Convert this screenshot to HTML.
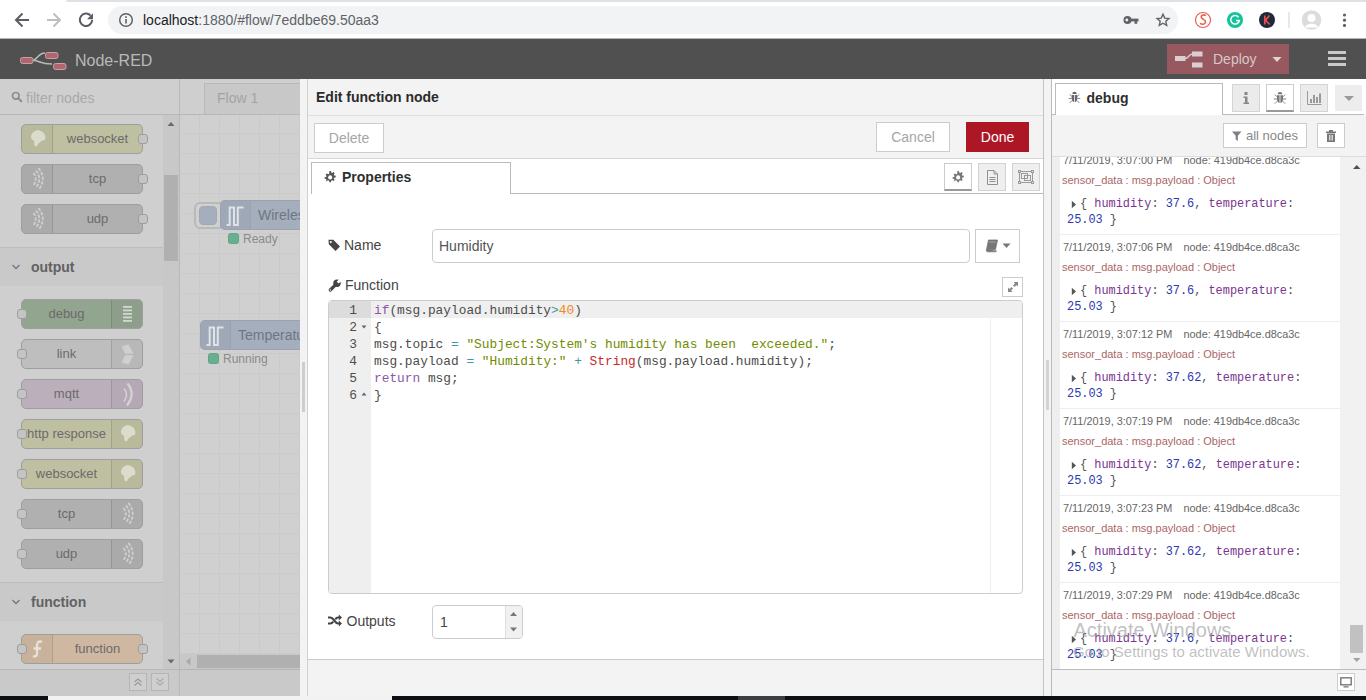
<!DOCTYPE html>
<html><head><meta charset="utf-8"><title>Node-RED</title>
<style>
*{box-sizing:border-box;margin:0;padding:0}
html,body{width:1366px;height:700px;overflow:hidden;background:#fff;font-family:"Liberation Sans",Arial,sans-serif;}
#root{position:absolute;left:0;top:0;width:1366px;height:700px;overflow:hidden;background:#fff}
.abs{position:absolute}
.t{position:absolute;white-space:nowrap;line-height:1}
/* chrome */
#tabstrip{left:66px;top:0;width:1300px;height:2px;background:#dee1e6;border-radius:0 0 0 3px}
#toolbar{left:0;top:0;width:1366px;height:39px;background:#fff}
#omni{left:108px;top:6px;width:1070px;height:28px;border-radius:14px;background:#f1f3f4}
/* header */
#hdr{left:0;top:39px;width:1366px;height:40px;background:#505050}
/* palette */
#pal{left:0;top:79px;width:179px;height:617px;background:#cfcfcf;overflow:hidden}
#ws{left:179px;top:79px;width:121px;height:617px;background:#cfcfcf;overflow:hidden}
#tray{left:300px;top:79px;width:745px;height:617px;background:#fff}
#sep{left:1044px;top:79px;width:7px;height:617px;background:#f3f3f3}
#side{left:1051px;top:79px;width:315px;height:617px;background:#fff}
#taskbar{left:0;top:696px;width:1366px;height:4px;background:#0c0e14}

/* chrome icons */
.ic{position:absolute}
#url{left:143px;top:13px;font-size:14px;color:#5f6368}
#url b{font-weight:normal;color:#202124}
#logo-t{left:75px;top:53px;font-size:16px;color:#b9b9b9}
#deploy{left:1167px;top:44px;width:122px;height:30px;background:#a05c64}
#deploy-t{left:1213px;top:52px;font-size:14px;color:#d4c8ca}

/* palette */
#pal-search{left:0;top:0;width:180px;height:36px;border-bottom:1px solid #b8b8b8;background:#cfcfcf}
#pal-search .t{left:26px;top:12px;font-size:14px;color:#a9a9a9}
#pal-scroll{left:0;top:36px;width:163px;height:554px;background:#cfcfcf}
#pal-sb{left:163px;top:36px;width:16px;height:554px;background:#c8c8c8}
#pal-foot{left:0;top:590px;width:180px;height:27px;background:#c9c9c9;border-top:1px solid #b8b8b8}
.pcat{position:absolute;left:0;width:163px;height:39px;background:#c9c9c9;border-top:1px solid #bcbcbc}
.pcat .t{left:31px;top:12px;font-size:14px;font-weight:bold;color:#626262}
.pn{position:absolute;left:21px;width:122px;height:30px;border:1px solid #9e9e9e;border-radius:5px}
.pn .lb{position:absolute;top:0;height:28px;line-height:28px;font-size:13px;color:#6b6b6b;text-align:center;white-space:nowrap}
.pn.in .lb{left:31px;right:0}
.pn.out .lb{left:0;right:31px}
.pn .icn{position:absolute;top:0;width:31px;height:28px;background:rgba(0,0,0,0.03)}
.pn.in .icn{left:0;border-right:1px solid rgba(0,0,0,0.12);border-radius:4px 0 0 4px}
.pn.out .icn{right:0;border-left:1px solid rgba(0,0,0,0.12);border-radius:0 4px 4px 0}
.pn .icn svg{position:absolute;left:0;top:0}
.port{position:absolute;width:10px;height:10px;top:9px;background:#c4c4c4;border:1px solid #9e9e9e;border-radius:3px}
.port.l{left:-5px}.port.r{right:-6px}
.pbtn{position:absolute;top:3px;width:18px;height:18px;border:1px solid #b5b5b5;background:#cfcfcf}

/* workspace */
#ws{border-left:1px solid #b8b8b8}
#ws-tabs{left:0;top:0;width:121px;height:36px;background:#cfcfcf;border-bottom:1px solid #b8b8b8}
#ws-tab{left:24px;top:4px;width:120px;height:31px;background:#c8c8c8;border:1px solid #b8b8b8;border-bottom:none}
#ws-tab .t{left:12px;top:7px;font-size:14px;color:#a3a3a3}
#ws-grid{left:1px;top:36px;width:119px;height:540px;background-color:#d0d0d0;
 background-image:linear-gradient(to right,#cacaca 1px,transparent 1px),linear-gradient(to bottom,#cacaca 1px,transparent 1px);background-size:20px 20px;background-position:18px 18px}
#ws-hsb{left:0;top:575px;width:121px;height:15px;background:#c8c8c8}
#ws-foot{left:0;top:590px;width:121px;height:27px;background:#c9c9c9;border-top:1px solid #b5b5b5}
.fn{position:absolute;height:30px;background:#a5aebc;border:1px solid #9ba3b0;border-radius:5px 0 0 5px;border-right:none}
.fn .icn{position:absolute;left:0;top:0;width:30px;height:28px;background:rgba(0,0,0,0.03);border-right:1px solid rgba(0,0,0,0.04);border-radius:4px 0 0 4px}
.fn .t{top:7px;font-size:14px;color:#6d7683}
.st{position:absolute;width:11px;height:11px;background:#6aae90;border-radius:2.5px;border:1px solid #62a487}
.stt{font-size:12px;color:#8b8b8b}

/* tray */
#tray{background:#f3f3f3}
#tray-main{left:7px;top:0;width:737px;height:617px;background:#fff;border-left:1px solid #d0d0d0;border-right:1px solid #c4c4c4}
#tray-hdr{left:0;top:0;width:735px;height:37px;background:#f3f3f3;border-bottom:1px solid #ddd}
#tray-hdr .t{left:8px;top:11px;font-size:14px;font-weight:bold;color:#2b2b2b}
#tray-tb{left:0;top:37px;width:735px;height:43px;background:#f3f3f3;border-bottom:1px solid #d6d6d6}
.btn{position:absolute;top:7px;height:30px;border:1px solid #ccc;background:#fff;font-size:14px;line-height:28px;text-align:center;color:#a6a6a6}
#tray-foot{left:0;top:580px;width:735px;height:37px;background:#f3f3f3;border-top:1px solid #c9c9c9}
#ptab{left:3px;top:83px;width:200px;height:32px;background:#fff;border:1px solid #bbb;border-bottom:none}
#ptab .t{left:30px;top:7px;font-size:14px;font-weight:bold;color:#2f2f2f}
#ptabline{left:203px;top:114px;width:532px;height:1px;background:#bbb}
.ibtn{position:absolute;top:84px;width:28px;height:28px;border:1px solid #d2d2d2;background:#efefef}
.lbl{font-size:14px;color:#444}
#name-in{left:124px;top:150px;width:538px;height:34px;border:1px solid #ccc;border-radius:4px;background:#fff}
#name-in .t{left:6px;top:9px;font-size:14px;color:#555}
#book{left:667px;top:150px;width:45px;height:34px;border:1px solid #ccc;background:#fff}
#expand{left:694px;top:198px;width:21px;height:20px;border:1px solid #ccc;background:#fff}
#ace{left:20px;top:221px;width:695px;height:294px;border:1px solid #ccc;border-radius:4px;background:#fff;overflow:hidden}
#ace .gut{position:absolute;left:0;top:0;width:42px;height:292px;background:#efefef}
#ace .al{position:absolute;left:0;top:0;width:693px;height:17px;background:#efefef}
#ace .gal{position:absolute;left:0;top:0;width:42px;height:17px;background:#dcdcdc}
#ace .pm{position:absolute;left:661px;top:0;width:1px;height:292px;background:#f0f0f0}
.ln,.cl{position:absolute;font-family:"Liberation Mono","DejaVu Sans Mono",monospace;font-size:12.83px;line-height:17px;height:17px;white-space:pre;color:#4d4d4c}
.ln{left:0;width:28px;text-align:right}
.cl{left:45px}
.k{color:#8959a8}.o{color:#3e999f}.n{color:#f5871f}.s{color:#718c00}.v{color:#c82829}
#outs-in{left:124px;top:526px;width:91px;height:34px;border:1px solid #ccc;border-radius:4px;background:#fff}

/* sidebar */
#side{border-left:1px solid #bbb;background:#fff}
#sd-tabs{left:0;top:0;width:313px;height:36px;background:#fff}
#sd-tabline{left:169px;top:35px;width:142px;height:1px;background:#bbb}
#sd-tab{left:2px;top:4px;width:168px;height:32px;background:#fff;border:1px solid #bbb;border-bottom:none}
#sd-tab .t{left:30.500px;top:6.500px;font-size:14px;font-weight:bold;color:#2f2f2f}
.sbtn{position:absolute;top:5px;width:28px;height:28px;border:1px solid #d4d4d4;background:#ebebeb}
#sd-tb{left:-1px;top:36px;width:315px;height:42px;background:#f3f3f3;border-bottom:1px solid #ddd}
.sb2{position:absolute;top:8px;height:25px;border:1px solid #ccc;background:#fff}
#sd-list{left:-1px;top:78px;width:288px;height:512px;background:#fff;overflow:hidden}
#sd-sb{left:287px;top:78px;width:26px;height:512px;background:#f1f1f1}
#sd-foot{left:-1px;top:590px;width:315px;height:27px;background:#f3f3f3;border-top:1px solid #bbb}
.msg{position:absolute;left:0;width:288px;height:87px;border-left:8px solid #eee;border-top:1px solid #eee}
.msg .t{font-size:10.9px;color:#666}
.msg .tp{font-size:11px;color:#a66}
.msg .pl{position:absolute;font-family:"Liberation Mono","DejaVu Sans Mono",monospace;font-size:11.9px;white-space:pre;line-height:1;color:#555}
.ky{color:#7a3590}.nm{color:#2a38b0}
.wm{position:absolute;white-space:nowrap;color:rgba(150,150,150,0.6);line-height:1}
</style></head><body><div id="root">
<div id="toolbar" class="abs"></div>
<div id="tabstrip" class="abs"></div><div class="abs" style="left:0;top:38px;width:1366px;height:1px;background:#b4b4b4"></div>
<div id="omni" class="abs"></div>

<svg class="ic" style="left:0;top:0" width="1366" height="39" viewBox="0 0 1366 39">
 <!-- back -->
 <g fill="none" stroke="#5a5d61" stroke-width="2" stroke-linecap="butt" stroke-linejoin="miter">
  <path d="M29 20H16.5M22.5 13.5L16 20l6.500 6.500"/>
 </g>
 <g fill="none" stroke="#bcbec1" stroke-width="2">
  <path d="M47 20H59.500M53.500 13.500L60 20l-6.500 6.500"/>
 </g>
 <g fill="none" stroke="#5a5d61" stroke-width="2">
  <path d="M90.600 15.600A6.200 6.200 0 1 0 92.200 20"/>
 </g>
 <path d="M93 13.200v6h-6z" fill="#5a5d61"/>
 <!-- info -->
 <circle cx="126" cy="20" r="6.300" fill="none" stroke="#5f6368" stroke-width="1.500"/>
 <rect x="125.200" y="19" width="1.600" height="4.500" fill="#5f6368"/>
 <rect x="125.200" y="16.200" width="1.600" height="1.700" fill="#5f6368"/>
 <!-- key -->
 <g fill="#5f6368"><circle cx="1127.500" cy="20" r="4"/><rect x="1129" y="18.600" width="9.500" height="2.800"/><rect x="1134.500" y="20" width="2.700" height="3.800"/></g>
 <circle cx="1126.800" cy="20" r="1.400" fill="#f1f3f4"/>
 <!-- star -->
 <path d="M1163 14.200l1.750 3.900 4.200.4-3.150 2.800.9 4.100-3.700-2.150-3.700 2.150.9-4.100-3.150-2.800 4.200-.4z" fill="none" stroke="#5f6368" stroke-width="1.400" stroke-linejoin="miter"/>
 <!-- ext icons -->
 <circle cx="1203" cy="20" r="7.500" fill="#fff" stroke="#e8604f" stroke-width="1.200"/>
 <path d="M1206 15.500c-3-1.500-5.500 0-4.500 2.200s4.500 2 4 4.500-3.500 2.500-5.500 1.200" fill="none" stroke="#e8604f" stroke-width="1.600"/>
 <circle cx="1235" cy="20" r="8" fill="#15c39a"/>
 <path d="M1238.500 17.200a4.300 4.300 0 1 0 .8 3.300h-3.300" fill="none" stroke="#fff" stroke-width="1.500"/>
 <circle cx="1267" cy="20" r="8" fill="#1c2a3a"/>
 <path d="M1264.800 15.500v9M1269.500 15.500l-4 4.800 4.200 4.200" fill="none" stroke="#e8504f" stroke-width="1.700"/>
 <rect x="1288.500" y="12" width="1" height="16" fill="#d0d2d5"/>
 <circle cx="1311.500" cy="20" r="9.800" fill="#dcdcdc"/>
 <circle cx="1311.500" cy="18" r="4" fill="#fff"/>
 <path d="M1305 27.500c1-5 12-5 13 0z" fill="#fff"/>
 <g fill="#5f6368"><circle cx="1344.500" cy="15" r="1.600"/><circle cx="1344.500" cy="20.200" r="1.600"/><circle cx="1344.500" cy="25.400" r="1.600"/></g>
</svg>
<div id="url" class="t"><b>localhost</b>:1880/#flow/7eddbe69.50aa3</div>
<div id="hdr" class="abs"></div>

<svg class="ic" style="left:0;top:39px" width="1366" height="40" viewBox="0 0 1366 40">
 <!-- logo -->
 <g fill="none" stroke="#b9b9b9" stroke-width="1.600">
  <path d="M32 21.500c5 0 6-7.500 13-7.500M34 21.500c5 0 6 3.500 18 3.500"/>
 </g>
 <g fill="#b0666c" stroke="#c4a3a6" stroke-width="1">
  <rect x="20.500" y="18.500" width="12.500" height="6" rx="2"/>
  <rect x="45.500" y="13.500" width="12.500" height="6" rx="2"/>
  <rect x="53.500" y="24.500" width="12.500" height="6" rx="2"/>
 </g>
 <!-- deploy -->
 <rect x="1167" y="5" width="122" height="30" fill="#98585f"/>
 <g fill="#d9cfd0">
  <rect x="1175" y="17" width="10.500" height="5"/>
  <rect x="1192" y="12.500" width="10.500" height="5"/>
  <rect x="1192" y="23.500" width="10.500" height="5"/>
 </g>
 <path d="M1185 19.500c4 0 3.500-4.500 7.500-4.500" fill="none" stroke="#d9cfd0" stroke-width="1.300"/>
 <path d="M1272.500 18h9l-4.500 5z" fill="#e0d5d6"/>
 <!-- hamburger -->
 <g fill="#c9c9c9"><rect x="1328" y="12" width="18" height="3"/><rect x="1328" y="18" width="18" height="3"/><rect x="1328" y="24" width="18" height="3"/></g>
</svg>
<div id="logo-t" class="t">Node-RED</div>
<div id="deploy-t" class="t">Deploy</div>

<div id="pal" class="abs">
<div id="pal-search" class="abs"><svg class="ic" style="left:11px;top:12px" width="12" height="12" viewBox="0 0 12 12"><circle cx="4.800" cy="4.800" r="3.300" fill="none" stroke="#8e8e8e" stroke-width="1.700"/><path d="M7.300 7.300l3 3" stroke="#8e8e8e" stroke-width="2" stroke-linecap="round"/></svg><div class="t">filter nodes</div></div>
<div id="pal-scroll" class="abs">
<div class="pn in" style="top:9px;background:#bfbfa1"><div class="icn"><svg width="31" height="28" viewBox="0 0 31 28"><path transform="translate(-1.200,-2.500) scale(1.150)" d="M15.500 6.500c-4 .2-7 3-6.500 7 .3 1.500 1.800 1.500 2.500 2.500.5 1.500-.5 3 1 4.500 1 .8 2-.2 2.300-1.200.4-1.500 2-1.500 2.700-2.700.8-1.200 2.500-.5 3.500-1.800 1.200-2-.2-5-2-6.500-1-.8-2.200-1.300-3.500-1.300z" fill="#fff" fill-opacity=".5"/></svg></div><div class="lb">websocket</div><div class="port r"></div></div>
<div class="pn in" style="top:49px;background:#b0b0b0"><div class="icn"><svg width="31" height="28" viewBox="0 0 31 28"><g fill="none" stroke="#fff" stroke-opacity=".45" stroke-width="1.800" stroke-dasharray="3.200 1.600"><path d="M11.500 8q4.500 6 0 12"/><path d="M14 5.500q6.500 8.500 0 17"/><path d="M16.500 3q8.500 11 0 22"/></g></svg></div><div class="lb">tcp</div><div class="port r"></div></div>
<div class="pn in" style="top:89px;background:#b0b0b0"><div class="icn"><svg width="31" height="28" viewBox="0 0 31 28"><g fill="none" stroke="#fff" stroke-opacity=".45" stroke-width="1.800" stroke-dasharray="3.200 1.600"><path d="M11.500 8q4.500 6 0 12"/><path d="M14 5.500q6.500 8.500 0 17"/><path d="M16.500 3q8.500 11 0 22"/></g></svg></div><div class="lb">udp</div><div class="port r"></div></div>
<div class="pcat" style="top:132px"><svg class="ic" style="left:11px;top:15px" width="10" height="8" viewBox="0 0 10 8"><path d="M1.500 2l3.500 3.500L8.500 2" fill="none" stroke="#777" stroke-width="1.300"/></svg><div class="t">output</div></div>
<div class="pn out" style="top:184px;background:#92a58f"><div class="icn"><svg width="31" height="28" viewBox="0 0 31 28"><g fill="#fff" fill-opacity=".6"><rect x="11" y="6" width="9" height="1.800"/><rect x="11" y="9.500" width="9" height="1.800"/><rect x="11" y="13" width="9" height="1.800"/><rect x="11" y="16.500" width="9" height="1.800"/><rect x="11" y="20" width="9" height="1.800"/></g></svg></div><div class="lb">debug</div><div class="port l"></div></div>
<div class="pn out" style="top:224px;background:#bebebe"><div class="icn"><svg width="31" height="28" viewBox="0 0 31 28"><g fill="#fff" fill-opacity=".32"><path d="M9.500 6.500l7-2.300 5 9.600h-8.300zM9.500 22.500l7 2.300 5-9.600h-8.300z"/></g></svg></div><div class="lb">link</div><div class="port l"></div></div>
<div class="pn out" style="top:264px;background:#bbafbc"><div class="icn"><svg width="31" height="28" viewBox="0 0 31 28"><g fill="none" stroke="#fff" stroke-opacity=".45"><path d="M12 8.500q5 6 0 13" stroke-width="1.600"/><path d="M15.500 3.500q8.500 10.500-.5 22" stroke-width="2.400"/></g></svg></div><div class="lb">mqtt</div><div class="port l"></div></div>
<div class="pn out" style="top:304px;background:#bfbfa1"><div class="icn"><svg width="31" height="28" viewBox="0 0 31 28"><path transform="translate(-1.200,-2.500) scale(1.150)" d="M15.500 6.500c-4 .2-7 3-6.500 7 .3 1.500 1.800 1.500 2.500 2.500.5 1.500-.5 3 1 4.500 1 .8 2-.2 2.300-1.200.4-1.500 2-1.500 2.700-2.700.8-1.200 2.500-.5 3.500-1.800 1.200-2-.2-5-2-6.500-1-.8-2.200-1.300-3.500-1.300z" fill="#fff" fill-opacity=".5"/></svg></div><div class="lb">http response</div><div class="port l"></div></div>
<div class="pn out" style="top:344px;background:#bfbfa1"><div class="icn"><svg width="31" height="28" viewBox="0 0 31 28"><path transform="translate(-1.200,-2.500) scale(1.150)" d="M15.500 6.500c-4 .2-7 3-6.500 7 .3 1.500 1.800 1.500 2.500 2.500.5 1.500-.5 3 1 4.500 1 .8 2-.2 2.300-1.200.4-1.500 2-1.500 2.700-2.700.8-1.200 2.500-.5 3.500-1.800 1.200-2-.2-5-2-6.500-1-.8-2.200-1.300-3.500-1.300z" fill="#fff" fill-opacity=".5"/></svg></div><div class="lb">websocket</div><div class="port l"></div></div>
<div class="pn out" style="top:384px;background:#b0b0b0"><div class="icn"><svg width="31" height="28" viewBox="0 0 31 28"><g fill="none" stroke="#fff" stroke-opacity=".45" stroke-width="1.800" stroke-dasharray="3.200 1.600"><path d="M11.500 8q4.500 6 0 12"/><path d="M14 5.500q6.500 8.500 0 17"/><path d="M16.500 3q8.500 11 0 22"/></g></svg></div><div class="lb">tcp</div><div class="port l"></div></div>
<div class="pn out" style="top:424px;background:#b0b0b0"><div class="icn"><svg width="31" height="28" viewBox="0 0 31 28"><g fill="none" stroke="#fff" stroke-opacity=".45" stroke-width="1.800" stroke-dasharray="3.200 1.600"><path d="M11.500 8q4.500 6 0 12"/><path d="M14 5.500q6.500 8.500 0 17"/><path d="M16.500 3q8.500 11 0 22"/></g></svg></div><div class="lb">udp</div><div class="port l"></div></div>
<div class="pcat" style="top:467px"><svg class="ic" style="left:11px;top:15px" width="10" height="8" viewBox="0 0 10 8"><path d="M1.500 2l3.500 3.500L8.500 2" fill="none" stroke="#777" stroke-width="1.300"/></svg><div class="t">function</div></div>
<div class="pn in" style="top:519px;background:#cfb8a1"><div class="icn"><svg width="31" height="28" viewBox="0 0 31 28"><path d="M20 6.800c-3.500-1.200-5 .5-5 4.200v7.500c0 2.500-1.500 3.300-4 2.700M11.500 13.500h7.500" fill="none" stroke="#fff" stroke-opacity=".6" stroke-width="2.400"/></svg></div><div class="lb">function</div><div class="port l"></div><div class="port r"></div></div>
</div>
<div id="pal-sb" class="abs"><svg class="ic" style="left:0;top:0" width="16" height="554" viewBox="0 0 16 554"><path d="M4.500 11h7L8 7z" fill="#6a6a6a"/><rect x="1" y="60" width="14" height="86" fill="#b0b0b0"/><path d="M4.500 544.500h7L8 548.500z" fill="#6a6a6a"/></svg></div>
<div id="pal-foot" class="abs"><div class="pbtn" style="left:129px"><svg width="16" height="16" viewBox="0 0 16 16"><path d="M4.500 8l3.500-3 3.500 3M4.500 11.500l3.500-3 3.500 3" fill="none" stroke="#999" stroke-width="1.200"/></svg></div><div class="pbtn" style="left:151px"><svg width="16" height="16" viewBox="0 0 16 16"><path d="M4.500 4.500l3.500 3 3.500-3M4.500 8l3.500 3 3.500-3" fill="none" stroke="#aaa" stroke-width="1.200"/></svg></div></div>
</div>
<div id="ws" class="abs">
<div id="ws-tabs" class="abs"><div id="ws-tab" class="abs"><div class="t">Flow 1</div></div></div>
<div id="ws-grid" class="abs">
 <div class="abs" style="left:13px;top:87px;width:30px;height:27px;border:2px solid #b9b9b9;border-radius:6px;background:#d0d0d0"></div>
 <div class="abs" style="left:18px;top:91px;width:18px;height:19px;border-radius:4px;background:#a5aebc;border:1px solid #a3a9b3"></div>
 <div class="fn" style="left:39px;top:85px;width:100px"><div class="icn"><svg class="ic" style="left:4px;top:4px" width="22" height="22" viewBox="0 0 22 22"><path d="M1.500 20h3.200V2.500h4.300V20h3.800V2.500h5.700" fill="none" stroke="#dfe3e9" stroke-width="2"/></svg></div><div class="t" style="left:37px">Wireless</div></div>
 <div class="st" style="left:47px;top:118px"></div><div class="t stt" style="left:62px;top:118px">Ready</div>
 <div class="fn" style="left:19px;top:205px;width:120px"><div class="icn"><svg class="ic" style="left:4px;top:4px" width="22" height="22" viewBox="0 0 22 22"><path d="M1.500 20h3.200V2.500h4.300V20h3.800V2.500h5.700" fill="none" stroke="#dfe3e9" stroke-width="2"/></svg></div><div class="t" style="left:37px">Temperature</div></div>
 <div class="st" style="left:27px;top:238px"></div><div class="t stt" style="left:42px;top:238px">Running</div>
</div>
<div id="ws-hsb" class="abs"><svg class="ic" style="left:0;top:0" width="120" height="15" viewBox="0 0 120 15"><path d="M10.500 3.500v8L6 7.500z" fill="#a8a8a8"/><rect x="17" y="1" width="103" height="13" fill="#b0b0b0"/></svg></div>
<div id="ws-foot" class="abs"></div>
</div>
<div id="tray" class="abs">
<div id="tray-main" class="abs">
 <div id="tray-hdr" class="abs"><div class="t">Edit function node</div></div>
 <div id="tray-tb" class="abs">
  <div class="btn" style="left:6px;width:70px">Delete</div>
  <div class="btn" style="left:568px;top:6px;width:74px">Cancel</div>
  <div class="btn" style="left:658px;top:6px;width:63px;background:#ad1625;border-color:#ad1625;color:#fff">Done</div>
 </div>
 <div id="ptab" class="abs"><svg class="ic" style="left:12px;top:8px" width="12.500" height="12.500" viewBox="0 0 15 15" fill="#555"><path d="M6.500 0h1.800l.4 1.800 1.200.5 1.600-1 1.300 1.300-1 1.600.5 1.200 1.800.4v1.800l-1.800.4-.5 1.200 1 1.600-1.300 1.300-1.600-1-1.200.5-.4 1.800H6.500l-.4-1.800-1.200-.5-1.600 1L2 12.500l1-1.600-.5-1.200L.7 9.300V7.500l1.800-.4.5-1.200-1-1.600L3.300 3l1.600 1 1.200-.5zM7.400 5.200a2.500 2.500 0 1 0 .01 0z" fill-rule="evenodd"/></svg><div class="t">Properties</div></div>
 <div id="ptabline" class="abs"></div>
 <div class="ibtn" style="left:636px;background:#fff;border-color:#ccc;border-bottom:2px solid #999"><svg class="ic" style="left:7px;top:7px" width="12.500" height="12.500" viewBox="0 0 15 15" fill="#777"><path d="M6.500 0h1.800l.4 1.800 1.200.5 1.600-1 1.300 1.300-1 1.600.5 1.200 1.800.4v1.800l-1.800.4-.5 1.200 1 1.600-1.300 1.300-1.600-1-1.200.5-.4 1.800H6.500l-.4-1.800-1.200-.5-1.600 1L2 12.500l1-1.600-.5-1.200L.7 9.300V7.500l1.800-.4.5-1.200-1-1.600L3.300 3l1.600 1 1.200-.5zM7.400 5.200a2.500 2.500 0 1 0 .01 0z" fill-rule="evenodd"/></svg></div>
 <div class="ibtn" style="left:670px"><svg class="ic" style="left:0;top:0" width="26" height="26" viewBox="0 0 26 26"><path d="M8.500 6.500h6.500l3.500 3.500v10.500h-10zM15 6.500v3.500h3.500M10.500 13.500h6M10.500 15.500h6M10.500 17.500h6" fill="none" stroke="#909090" stroke-width="1"/></svg></div>
 <div class="ibtn" style="left:704px"><svg class="ic" style="left:0;top:0" width="26" height="26" viewBox="0 0 26 26"><g fill="none" stroke="#999" stroke-width="1"><rect x="6.500" y="7.500" width="13" height="11"/><rect x="8.500" y="9.500" width="6" height="5"/><rect x="11.500" y="11.500" width="6" height="5"/></g><g fill="#efefef" stroke="#999" stroke-width="1"><rect x="5.500" y="6.500" width="2" height="2"/><rect x="18.500" y="6.500" width="2" height="2"/><rect x="5.500" y="17.500" width="2" height="2"/><rect x="18.500" y="17.500" width="2" height="2"/></g></svg></div>
 <svg class="ic" style="left:20px;top:160px" width="13" height="13" viewBox="0 0 13 13"><path d="M.5.800h4.800l6.700 6.700-4.500 4.500L.8 5.300zM2.800 2a1 1 0 1 0 .01 0z" fill="#444" fill-rule="evenodd"/></svg>
 <div class="t lbl" style="left:36px;top:159px">Name</div>
 <div id="name-in" class="abs"><div class="t">Humidity</div></div>
 <div id="book" class="abs"><svg class="ic" style="left:9px;top:9px" width="28" height="14" viewBox="0 0 28 14"><path d="M3.500 1h9l-2 9.500h-9zM1.500 10.500c-.8 1.500.5 2.300 1.500 2.300h8l.5-1.200" fill="#777" stroke="#777" stroke-width=".8"/><path d="M4.500 3h6" stroke="#aaa" stroke-width="1"/><path d="M17.500 4.500h8L21.500 9z" fill="#777"/></svg></div>
 <svg class="ic" style="left:20px;top:200px" width="13" height="13" viewBox="0 0 13 13"><path d="M2.300 11L8 5.300" stroke="#444" stroke-width="3.200" stroke-linecap="round" fill="none"/><circle cx="9" cy="4.300" r="3.700" fill="#444"/><path d="M9.700 3.600L13.500-.2" stroke="#fff" stroke-width="2.700" fill="none"/><circle cx="2.400" cy="10.900" r=".75" fill="#fff"/></svg>
 <div class="t lbl" style="left:37px;top:199px">Function</div>
 <div id="expand" class="abs"><svg class="ic" style="left:4px;top:3px" width="12" height="12" viewBox="0 0 12 12"><path d="M6.500 1h4.500v4.500l-1.500-1.500-2 2-1.500-1.500 2-2zM5.500 11H1V6.500l1.500 1.500 2-2 1.500 1.500-2 2z" fill="#888"/></svg></div>
 <div id="ace" class="abs"><div class="gut"></div><div class="al"></div><div class="gal"></div><div class="pm"></div>
<div class="ln" style="top:1px">1</div><div class="cl" style="top:1px"><span class="k">if</span>(msg.payload.humidity<span class="o">&gt;</span><span class="n">40</span>)</div>
<div class="ln" style="top:18px">2</div><svg class="ic" style="left:31px;top:23px" width="8" height="6" viewBox="0 0 8 6"><path d="M1.500 1.500h5L4 4.500z" fill="#666"/></svg><div class="cl" style="top:18px">{</div>
<div class="ln" style="top:35px">3</div><div class="cl" style="top:35px">msg.topic <span class="o">=</span> <span class="s">"Subject:System's humidity has been  exceeded."</span>;</div>
<div class="ln" style="top:52px">4</div><div class="cl" style="top:52px">msg.payload <span class="o">=</span> <span class="s">"Humidity:"</span> <span class="o">+</span> <span class="v">String</span>(msg.payload.humidity);</div>
<div class="ln" style="top:69px">5</div><div class="cl" style="top:69px"><span class="k">return</span> msg;</div>
<div class="ln" style="top:86px">6</div><svg class="ic" style="left:31px;top:90px" width="8" height="6" viewBox="0 0 8 6"><path d="M1.500 4.500h5L4 1.500z" fill="#666"/></svg><div class="cl" style="top:86px">}</div>
</div>
 <svg class="ic" style="left:20px;top:535px" width="14" height="13" viewBox="0 0 14 13"><g fill="none" stroke="#444" stroke-width="2.100"><path d="M0 3.500h2.500c3 0 4.500 6 7.500 6h1.500M0 9.500h2.500c1.200 0 2-.8 2.700-1.800M7.300 5.300c.7-1 1.500-1.800 2.700-1.800h1.500"/></g><path d="M10.800.5l3.200 3-3.200 3zM10.800 6.500l3.200 3-3.200 3z" fill="#444"/></svg>
 <div class="t lbl" style="left:38.500px;top:535px">Outputs</div>
 <div id="outs-in" class="abs"><div class="t" style="left:7px;top:9px;font-size:14px;color:#444">1</div>
  <div class="abs" style="left:72px;top:0;width:17px;height:32px;background:#f1f1f1;border-left:1px solid #ddd;border-radius:0 3px 3px 0"></div>
  <svg class="ic" style="left:72px;top:0" width="17" height="32" viewBox="0 0 17 32"><path d="M5 10h7L8.500 6zM5 21.500h7L8.500 25.500z" fill="#777"/></svg>
 </div>
 <div id="tray-foot" class="abs"></div>
</div>
<div class="abs" style="left:2px;top:283px;width:3px;height:50px;background:#cdcdcd"></div>
</div>
<div id="sep" class="abs"><div class="abs" style="left:2px;top:281px;width:3px;height:50px;background:#d3d3d3"></div></div>
<div id="side" class="abs"><div class="abs" style="left:1px;top:0;width:313px;height:617px">
<div id="sd-tabs" class="abs"></div><div id="sd-tabline" class="abs"></div><div class="abs" style="left:-1px;top:35px;width:4px;height:1px;background:#bbb"></div>
<div id="sd-tab" class="abs"><svg class="ic" style="left:12px;top:7px" width="13" height="14" viewBox="0 0 14 15"><g fill="#6d6470"><path d="M4.600 3.300a2.400 2.400 0 0 1 4.800 0z"/><path d="M4 4.300h2.600v7.700a3 3.500 0 0 1-2.600-3.400zM7.400 4.300H10v4.300a3 3.500 0 0 1-2.600 3.400z"/></g><g stroke="#6d6470" stroke-width=".9" fill="none"><path d="M4 5.800L1.800 3.600M10 5.800l2.200-2.200M4 8H.8M10 8h3.200M4.300 10.200L1.800 12.700M9.700 10.200l2.500 2.500"/></g></svg><div class="t">debug</div></div>
<div class="sbtn" style="left:179px"><svg class="ic" style="left:0;top:0" width="26" height="26" viewBox="0 0 26 26"><path d="M11.500 7h3v3h-3zM10.500 11.500h4v6h1.500v1.500h-5.500v-1.500h1.500v-4.500h-1.500z" fill="#888"/></svg></div>
<div class="sbtn" style="left:213px;background:#fff;border-color:#ccc;border-bottom:2px solid #999"><svg class="ic" style="left:6px;top:6px" width="14" height="15" viewBox="0 0 14 15"><g fill="#777"><path d="M4.600 3.300a2.400 2.400 0 0 1 4.800 0z"/><path d="M4 4.300h2.600v7.700a3 3.500 0 0 1-2.600-3.400zM7.400 4.300H10v4.300a3 3.500 0 0 1-2.600 3.400z"/></g><g stroke="#777" stroke-width=".9" fill="none"><path d="M4 5.800L1.800 3.600M10 5.800l2.200-2.200M4 8H.8M10 8h3.200M4.300 10.200L1.800 12.700M9.700 10.200l2.500 2.500"/></g></svg></div>
<div class="sbtn" style="left:247px"><svg class="ic" style="left:0;top:0" width="26" height="26" viewBox="0 0 26 26"><path d="M6.500 6v13.500h14" fill="none" stroke="#999" stroke-width="1"/><path d="M9 14h2v4h-2zM12 10h2v8h-2zM15 12h2v6h-2zM18 8.500h2v9.500h-2z" fill="#999"/></svg></div>
<div class="abs" style="left:282px;top:6px;width:27px;height:26px;background:#ededed"><svg class="ic" style="left:8px;top:10px" width="12" height="7" viewBox="0 0 12 7"><path d="M1 1h10L6 6z" fill="#999"/></svg></div>
<div id="sd-tb" class="abs">
 <div class="sb2" style="left:171px;width:84px"><svg class="ic" style="left:8px;top:6.500px" width="9.500" height="10.500" viewBox="0 0 11 12"><path d="M0 .5h11L6.800 5.500v6L4.200 9.500v-4z" fill="#808080"/></svg><div class="t" style="left:22px;top:4.500px;font-size:13px;color:#888">all nodes</div></div>
 <div class="sb2" style="left:265px;width:28px"><svg class="ic" style="left:7px;top:5px" width="12" height="14" viewBox="0 0 12 14"><path d="M1 2.500h10v1.500H1zM4 1h4v1.500H4zM2 4.500h8v8.500H2z" fill="#777"/><path d="M4.500 6v5.500M6 6v5.500M7.500 6v5.500" stroke="#fff" stroke-width=".7"/></svg></div>
</div>
<div id="sd-list" class="abs">
<div class="msg" style="top:-10px"><div class="t" style="left:3px;top:7px">7/11/2019, 3:07:00 PM</div><div class="t" style="left:123.500px;top:7px">node: 419db4ce.d8ca3c</div><div class="t tp" style="left:2px;top:26.500px">sensor_data : msg.payload : Object</div><svg class="ic" style="left:11px;top:52px" width="6" height="9" viewBox="0 0 6 9"><path d="M.8.800L5 4.500.8 8.200z" fill="#555"/></svg><div class="pl" style="left:20px;top:51px">{ <span class="ky">humidity</span>: <span class="nm">37.6</span>, <span class="ky">temperature</span>:</div><div class="pl" style="left:7px;top:67px"><span class="nm">25.03</span> }</div></div>
<div class="msg" style="top:77px"><div class="t" style="left:3px;top:7px">7/11/2019, 3:07:06 PM</div><div class="t" style="left:123.500px;top:7px">node: 419db4ce.d8ca3c</div><div class="t tp" style="left:2px;top:26.500px">sensor_data : msg.payload : Object</div><svg class="ic" style="left:11px;top:52px" width="6" height="9" viewBox="0 0 6 9"><path d="M.8.800L5 4.500.8 8.200z" fill="#555"/></svg><div class="pl" style="left:20px;top:51px">{ <span class="ky">humidity</span>: <span class="nm">37.6</span>, <span class="ky">temperature</span>:</div><div class="pl" style="left:7px;top:67px"><span class="nm">25.03</span> }</div></div>
<div class="msg" style="top:164px"><div class="t" style="left:3px;top:7px">7/11/2019, 3:07:12 PM</div><div class="t" style="left:123.500px;top:7px">node: 419db4ce.d8ca3c</div><div class="t tp" style="left:2px;top:26.500px">sensor_data : msg.payload : Object</div><svg class="ic" style="left:11px;top:52px" width="6" height="9" viewBox="0 0 6 9"><path d="M.8.800L5 4.500.8 8.200z" fill="#555"/></svg><div class="pl" style="left:20px;top:51px">{ <span class="ky">humidity</span>: <span class="nm">37.62</span>, <span class="ky">temperature</span>:</div><div class="pl" style="left:7px;top:67px"><span class="nm">25.03</span> }</div></div>
<div class="msg" style="top:251px"><div class="t" style="left:3px;top:7px">7/11/2019, 3:07:19 PM</div><div class="t" style="left:123.500px;top:7px">node: 419db4ce.d8ca3c</div><div class="t tp" style="left:2px;top:26.500px">sensor_data : msg.payload : Object</div><svg class="ic" style="left:11px;top:52px" width="6" height="9" viewBox="0 0 6 9"><path d="M.8.800L5 4.500.8 8.200z" fill="#555"/></svg><div class="pl" style="left:20px;top:51px">{ <span class="ky">humidity</span>: <span class="nm">37.62</span>, <span class="ky">temperature</span>:</div><div class="pl" style="left:7px;top:67px"><span class="nm">25.03</span> }</div></div>
<div class="msg" style="top:338px"><div class="t" style="left:3px;top:7px">7/11/2019, 3:07:23 PM</div><div class="t" style="left:123.500px;top:7px">node: 419db4ce.d8ca3c</div><div class="t tp" style="left:2px;top:26.500px">sensor_data : msg.payload : Object</div><svg class="ic" style="left:11px;top:52px" width="6" height="9" viewBox="0 0 6 9"><path d="M.8.800L5 4.500.8 8.200z" fill="#555"/></svg><div class="pl" style="left:20px;top:51px">{ <span class="ky">humidity</span>: <span class="nm">37.62</span>, <span class="ky">temperature</span>:</div><div class="pl" style="left:7px;top:67px"><span class="nm">25.03</span> }</div></div>
<div class="msg" style="top:425px"><div class="t" style="left:3px;top:7px">7/11/2019, 3:07:29 PM</div><div class="t" style="left:123.500px;top:7px">node: 419db4ce.d8ca3c</div><div class="t tp" style="left:2px;top:26.500px">sensor_data : msg.payload : Object</div><svg class="ic" style="left:11px;top:52px" width="6" height="9" viewBox="0 0 6 9"><path d="M.8.800L5 4.500.8 8.200z" fill="#555"/></svg><div class="pl" style="left:20px;top:51px">{ <span class="ky">humidity</span>: <span class="nm">37.6</span>, <span class="ky">temperature</span>:</div><div class="pl" style="left:7px;top:67px"><span class="nm">25.03</span> }</div></div>

</div>
<div id="sd-sb" class="abs"><svg class="ic" style="left:0;top:0" width="26" height="512" viewBox="0 0 26 512"><path d="M13 12h7.500L16.750 8z" fill="#505050"/><rect x="10" y="468" width="13" height="28" fill="#c1c1c1"/><path d="M13 501h7.500l-3.750 4z" fill="#a3a3a3"/></svg></div>
<div class="wm" style="left:20.500px;top:541px;font-size:20px">Activate Windows</div>
<div class="wm" style="left:20px;top:565px;font-size:15px">Go to Settings to activate Windows.</div>
<div id="sd-foot" class="abs"><div class="abs" style="left:285px;top:3px;width:18px;height:18px;border:1px solid #ccc;background:#fff"><svg class="ic" style="left:2px;top:3px" width="12" height="11" viewBox="0 0 12 11"><rect x=".8" y=".8" width="10.400" height="7" fill="none" stroke="#777" stroke-width="1.400"/><rect x="3.500" y="9.200" width="5" height="1.300" fill="#777"/></svg></div></div>
</div></div>
<div id="taskbar" class="abs"><div class="abs" style="left:48px;top:0;width:344px;height:4px;background:#f2f2f2"></div><div class="abs" style="left:738px;top:0;width:47px;height:4px;background:#3b3d42"></div></div>
</div></body></html>
